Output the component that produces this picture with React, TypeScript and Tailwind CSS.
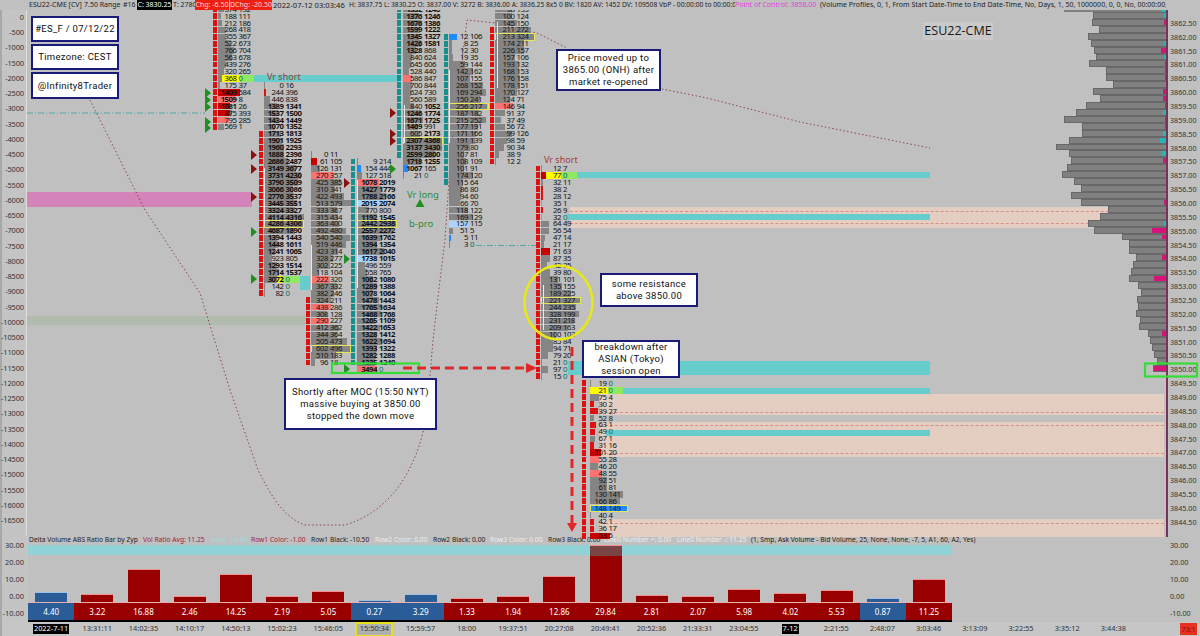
import React from "react";

const STEP = 6.93;
const rowY = (n: number) => 23 + n * STEP;

const DR = "#c80000";
const LR = "#ff7272";
const R = "#e01010";
const BL = "#1e8cff";
const LB = "#a8d4ff";
const GY = "#858585";
const YE = "#ffff00";
const GR = "#8fe860";

type Seg = [string, number];
type Col = {
  n: number;
  railX: number;
  railColor: string;
  rail: [number, number];
  barX: number;
  split: number;
  scale: number;
  rows: string;
  over?: Record<number, Seg[]>;
  hl?: number[];
  hlW?: number;
};

const columns: Col[] = [
  {
    n: -2, railX: 213, railColor: R, rail: [-2, 15], barX: 218, split: 236.5, scale: 0.011,
    rows: "374 132,188 111,212 186,268 418,355 367,522 673,766 704,563 678,439 276,320 265,368 0,175 37,1409 584,1509 8,1081 26,875 393,795 285,569 1",
    over: { 10: [[GY, 4], [YE, 18], [GR, 14]], 12: [[DR, 22]], 13: [[LR, 17]], 14: [[DR, 12]], 15: [[DR, 12], [GY, 2]], 16: [[LR, 11]] },
  },
  {
    n: 9, railX: 259, railColor: R, rail: [16, 39], barX: 264, split: 283.5, scale: 0.0047,
    rows: "0 16,244 396,446 838,1389 1341,1537 1500,1434 1449,1070 1352,1713 1813,1901 1925,1960 2293,1888 2396,2686 2487,3149 3677,3731 4230,3790 3509,3066 3086,2776 3537,3445 3551,3324 3327,4114 4316,4286 4306,4687 1890,1394 1443,1448 1611,1241 1065,923 805,1293 1514,1714 1537,3072 0,142 0,82 0",
    over: { 1: [[R, 2]], 28: [[GY, 13], [YE, 4], [GR, 19]] },
    hl: [20], hlW: 40,
  },
  {
    n: 19, railX: 306, railColor: R, rail: [40, 49], barX: 311, split: 328, scale: 0.0365,
    rows: "0 11,61 105,126 131,270 357,425 385,310 341,422 493,513 579,333 367,315 434,363 400,492 480,540 540,519 446,423 314,328 277,302 225,118 104,222 320,367 332,382 246,324 211,438 286,308 128,290 227,412 362,344 364,505 473,602 496,510 183,96 18",
    over: { 0: [[GY, 1]], 1: [[DR, 6]], 3: [[LR, 22]], 18: [[LR, 19]], 22: [[LR, 20]], 24: [[LR, 18]] },
    hl: [28], hlW: 40,
  },
  {
    n: 20, railX: 351, railColor: "#16908c", rail: [20, 49], barX: 357, split: 377, scale: 0.0074,
    rows: "9 214,154 444,127 518,1078 2019,1427 1779,1788 2166,2015 2074,770 800,1192 1545,2442 2938,2557 2272,1639 1762,1394 1354,1617 2040,1738 1015,496 559,558 765,1062 1080,1289 1388,1078 1064,1478 1443,1765 1634,1468 1768,1265 1109,1422 1653,1328 1412,1622 1694,1393 1322,1282 1288,1235 1240,3494 0",
    over: { 0: [[GY, 1]], 1: [[BL, 4]], 2: [[GY, 5]], 3: [[LR, 22]], 6: [[LB, 30]], 14: [[LB, 18]], 30: [[LR, 20]] },
    hl: [9], hlW: 40,
  },
  {
    n: -2, railX: 397, railColor: "#16908c", rail: [-2, 19], barX: 403, split: 422, scale: 0.006,
    rows: "1332 1248,1376 1246,1676 1386,1599 1222,1345 1327,1426 1581,1328 868,840 624,645 606,528 440,586 847,700 844,624 730,560 589,840 1052,1246 1774,1671 1725,1469 991,605 2173,2307 4368,3137 3430,2599 2800,1718 1255,1067 165,21 0",
    over: { 10: [[LR, 9]], 23: [[BL, 5], [LB, 2]], 24: [[GY, 1]] },
    hl: [19], hlW: 40,
  },
  {
    n: 2, railX: 444, railColor: "#16908c", rail: [2, 23], barX: 449, split: 468, scale: 0.08,
    rows: "12 106,8 25,12 30,19 35,59 144,142 162,107 155,268 152,169 294,150 241,256 217,187 182,215 252,177 191,171 166,191 139,179 80,107 81,108 109,101 91,174 120,115 64,86 80,94 60,66 70,118 122,169 129,157 115,51 5,5 11,3 0",
    over: { 0: [[BL, 8]], 27: [[LB, 20]], 29: [[BL, 2]] },
    hl: [10], hlW: 40,
  },
  {
    n: -2, railX: 490, railColor: R, rail: [1, 20], barX: 495, split: 514.5, scale: 0.0745,
    rows: "98 133,100 124,145 150,211 272,213 324,174 211,226 157,157 106,193 132,168 153,176 158,178 151,170 127,124 71,146 94,91 37,37 49,56 72,99 126,98 59,90 34,38 9,12 2",
    over: { 14: [[LR, 18]] },
    hl: [4], hlW: 40,
  },
  {
    n: 21, railX: 536, railColor: R, rail: [21, 51], barX: 541, split: 561, scale: 0.073,
    rows: "12 7,77 0,32 11,38 2,28 12,35 1,26 9,32 0,64 49,56 54,47 14,21 17,71 63,87 35,42 35,39 80,131 101,135 155,189 225,221 327,244 235,328 199,231 218,209 163,100 103,85 84,94 71,79 20,21 0,97 0,15 0",
    over: { 0: [[GY, 1]], 1: [[DR, 5], [YE, 15], [GR, 16]], 2: [[GY, 2]], 3: [[R, 2]], 4: [[R, 2]], 5: [[LR, 1]], 6: [[R, 2]], 7: [[LR, 1]], 12: [[DR, 9]], 28: [[GY, 1]], 30: [[GY, 1]] },
    hl: [19], hlW: 40,
  },
  {
    n: 52, railX: 582, railColor: R, rail: [52, 74], barX: 590, split: 606.5, scale: 0.12,
    rows: "19 0,21 0,75 4,30 2,39 27,52 8,63 1,49 0,67 1,31 16,101 20,55 28,46 20,48 55,92 51,61 81,130 141,166 86,148 149,40 4,42 1,36 17,53 5",
    over: { 0: [[GY, 1]], 1: [[YE, 18], [GR, 15]], 3: [[R, 4]], 4: [[R, 8]], 5: [[GY, 4]], 6: [[R, 6]], 7: [[R, 5]], 8: [[GY, 5]], 9: [[R, 4]], 10: [[DR, 11]], 11: [[LR, 9]], 13: [[LR, 12]], 18: [[BL, 38]], 19: [[GY, 1]], 20: [[R, 4]], 21: [[R, 4]], 22: [[DR, 20]] },
    hl: [18], hlW: 38,
  },
];

const profile: [number, string?, number?][] = [
  [158, "t", 2], [156, "p", 2], [177, "t", 1], [143, "t", 1], [153, "t", 2], [162, "p", 5], [168, "t", 2], [147, "p", 1],
  [198, "p", 1], [199, "p", 1], [220], [160, "p", 3], [179, "p", 3], [138, "p", 1], [108, "t", 3], [72, "p", 1],
  [127, "p", 1], [127, "t", 3], [88, "t", 6], [47, "t", 1], [88, "t", 4], [92, "p", 3], [82], [66],
  [102], [124], [94, "t", 1], [124, "p", 2], [203], [181], [144, "t", 2], [162, "p", 14],
  [247, "p", 4], [268], [267], [288, "p", 4], [279], [273], [268, "p", 12], [293], [303], [291],
  [295], [289], [300], [296], [323, "p", 4], [329], [335], [343], [351], [340, "p", 13],
];

const priceLabels = Array.from({ length: 37 }, (_, i) => (3862.5 - i * 0.5).toFixed(2));
const leftLabels = Array.from({ length: 34 }, (_, i) => String(-i * 500));

const vals = ["4.40", "3.22", "16.88", "2.46", "14.25", "2.19", "5.05", "0.27", "3.29", "1.33", "1.94", "12.86", "29.84", "2.81", "2.07", "5.98", "4.02", "5.53", "0.87", "11.25"];
const blue = new Set(["4.40", "0.27", "3.29", "0.87"]);
const times = ["2022-7-11", "13:31:11", "14:02:35", "14:10:17", "14:50:13", "15:02:23", "15:46:05", "15:50:34", "15:59:57", "18:00", "19:37:51", "20:27:08", "20:49:41", "20:52:36", "21:33:31", "23:04:55", "7-12", "2:21:55", "2:48:07", "3:03:46", "3:13:09", "3:22:55", "3:35:12", "3:44:38"];

const bands: [number, number, number, number, string][] = [
  [27, 192, 225, 15, "#d484b8"],
  [27, 316, 279, 9, "#b2bcae"],
  [570, 207, 594, 21, "#e4cec2"],
  [600, 394, 564, 21, "#e4cec2"],
  [600, 422, 564, 35, "#e4cec2"],
  [600, 519, 564, 18, "#e4cec2"],
  [253, 75, 146, 7, "#66cccc"],
  [300, 276, 10, 14, "#66cccc"],
  [577, 172, 353, 6, "#66cccc"],
  [567, 214, 363, 6, "#66cccc"],
  [568, 361, 362, 14, "#66cccc"],
  [623, 388, 307, 6, "#66cccc"],
  [606, 430, 324, 6, "#66cccc"],
];

const dashed: [number, number][] = [[570, 211], [570, 223], [600, 412], [600, 425], [600, 453], [600, 523]];

const brackets: [number, number, number][] = [
  [264, 168, 58], [311, 245, 45], [357, 180, 108], [404, 105, 38], [449, 70, 73], [497, 22, 66], [543, 285, 45],
];

const tris: [number, number, string][] = [
  [205, 93, "g"], [205, 100, "g"], [205, 107, "g"], [205, 122, "g"], [205, 128, "g"],
  [251, 155, "r"], [251, 169, "r"], [251, 197, "r"], [251, 232, "g"], [251, 279, "g"],
  [344, 183, "r"], [344, 259, "g"], [344, 369, "g"],
  [390, 169, "g"], [390, 113, "r"], [390, 134, "r"], [390, 141, "r"],
];

const headerItems: [string, string, number][] = [
  ["Delta Volume ABS Ratio Bar by Zyp", "text-[#222222]", 114],
  ["Vol Ratio Avg: 11.25", "text-[#a02040]", 68],
  ["Zone: 15.00", "text-[#9fdcdc]", 40],
  ["Row1 Color: -1.00", "text-[#a02040]", 60],
  ["Row1 Black: -10.50", "text-[#222222]", 64],
  ["Row2 Color: 0.00", "text-[#eeeeee]", 58],
  ["Row2 Black: 0.00", "text-[#222222]", 57],
  ["Row3 Color: 0.00", "text-[#eeeeee]", 58],
  ["Row3 Black: 0.00", "text-[#222222]", 56],
  ["Line0 Number +: 0.00", "text-[#eeeeee]", 73],
  ["Line0 Number -: 11.25", "text-[#eeeeee]", 74],
  ["(1, Smp, Ask Volume - Bid Volume, 25, None, None, -7, 5, A1, 60, A2, Yes)", "text-[#222222]", 232],
];

function FootCol({ c }: { c: Col }) {
  const rows = c.rows.split(",");
  const rail: number[] = [];
  for (let n = c.rail[0]; n <= c.rail[1]; n++) rail.push(n);
  return (
    <>
      {rail.map((n) => (
        <div key={n} className="absolute" style={{ left: c.railX, top: rowY(n) - 3, width: 3.6, height: 5.9, background: c.railColor }} />
      ))}
      {rows.map((r, i) => {
        const [bid, ask] = r.split(" ");
        const total = Number(bid) + Number(ask);
        const segs: Seg[] = c.over?.[i] ?? [[GY, Math.max(1, total * c.scale)]];
        const y = rowY(c.n + i);
        const isHl = c.hl?.includes(i);
        return (
          <React.Fragment key={i}>
            <div className="absolute flex" style={{ left: c.barX, top: y - 3.3, height: 6.6 }}>
              {segs.map((s, j) => (
                <div key={j} className="h-full" style={{ width: s[1], background: s[0] }} />
              ))}
            </div>
            {isHl && (
              <div className="absolute border border-[#e6e65a]" style={{ left: c.barX, top: y - 3.6, width: c.hlW, height: 7.4 }} />
            )}
            <div
              className={`absolute text-right text-[7.8px] leading-[7px] tracking-[-0.5px] text-[#111111] ${Number(bid) >= 1000 ? "font-bold" : "font-normal"}`}
              style={{ left: c.split - 30, top: y - 3.5, width: 30 }}
            >
              {bid}
            </div>
            <div
              className={`absolute text-left text-[7.8px] leading-[7px] tracking-[-0.5px] ${Number(ask) >= 1000 ? "font-bold" : "font-normal"} ${ask === "0" ? "text-[#006a60]" : "text-[#111111]"}`}
              style={{ left: c.split + 2, top: y - 3.5, width: 30 }}
            >
              {ask}
            </div>
          </React.Fragment>
        );
      })}
    </>
  );
}

function Note({ x, y, w, h, lines }: { x: number; y: number; w: number; h: number; lines: string[] }) {
  return (
    <div
      className="absolute flex flex-col items-center justify-center border-2 border-[#1a1a78] bg-white font-['Roboto',sans-serif] text-[9.5px] leading-[12px] tracking-[0.3px] text-[#111] whitespace-nowrap"
      style={{ left: x, top: y, width: w, height: h }}
    >
      {lines.map((l) => (
        <div key={l}>{l}</div>
      ))}
    </div>
  );
}

function ChartCanvas() {
  return (
    <div className="absolute -left-[27px] -top-[10px] h-[636px] w-[1200px]">
      {bands.map((b, i) => (
        <div key={i} className="absolute" style={{ left: b[0], top: b[1], width: b[2], height: b[3], background: b[4] }} />
      ))}
      {dashed.map((d, i) => (
        <div key={i} className="absolute border-t border-dashed border-[#d88f86]" style={{ left: d[0], top: d[1], width: 1164 - d[0] }} />
      ))}

      <div className="absolute flex flex-col items-end left-[1000px] top-[9px] w-[166px]">
        <div className="flex h-[3px] w-[102px] justify-end bg-[#808080]">
          <div className="h-full w-[4px] bg-[#20b8b8]" />
        </div>
        {profile.map((p, i) => (
          <div
            key={i}
            className="flex h-[6.93px] justify-end border-y border-l border-[#686868] bg-[#808080]"
            style={{ width: (378 - p[0]) / 3 }}
          >
            {p[1] && <div className={p[1] === "p" ? "h-full bg-[#d8127a]" : "h-full bg-[#20b8b8]"} style={{ width: p[2] }} />}
          </div>
        ))}
      </div>
      <div className="absolute left-[1166px] top-[9px] h-[528px] w-[1.5px] bg-[#7a3358]" />

      <svg className="absolute left-0 top-0" width="1200" height="636" fill="none">
        <path
          d="M90 100 L145 210 L200 293 L230 390 L258 470 C272 498 285 518 305 525 L345 525 C368 518 385 505 400 485 C415 462 423 440 427 410 L433 340 L440 280 L445 240 L451 150 L467 20 L495 23 L537 33 L567 48 M662 89 L707 98 L800 122 L930 148"
          stroke="#7a1c30"
          strokeWidth="0.8"
          strokeDasharray="1.4 2.4"
        />
        <line x1="27" y1="113" x2="205" y2="113" stroke="#4fa8a8" strokeWidth="1" strokeDasharray="6 2 1 2" />
        <line x1="476" y1="245.5" x2="536" y2="245.5" stroke="#4fa8a8" strokeWidth="1" strokeDasharray="6 2 1 2" />
      </svg>

      {columns.map((c, i) => (
        <FootCol key={i} c={c} />
      ))}

      {brackets.map((b, i) => (
        <div key={i} className="absolute w-[1.2px] bg-[#e8e8e8]" style={{ left: b[0], top: b[1], height: b[2] }} />
      ))}

      <div className="absolute left-[267px] top-[71px] font-['Noto_Sans',sans-serif] text-[9px] leading-[12px] text-[#a23a3a]">Vr short</div>
      <div className="absolute left-[544px] top-[154px] font-['Noto_Sans',sans-serif] text-[9px] leading-[12px] text-[#a23a3a]">Vr short</div>
      <div className="absolute left-[407px] top-[189px] font-['Noto_Sans',sans-serif] text-[9.5px] leading-[12px] text-[#2e8b3a]">Vr long</div>
      <div className="absolute left-[409px] top-[218px] font-['Noto_Sans',sans-serif] text-[9.5px] leading-[12px] text-[#2e8b3a]">b-pro</div>
      <div className="absolute left-[923px] top-[22px] flex h-[18px] w-[70px] items-center justify-center bg-[#c9c9c9] font-['Open_Sans',sans-serif] text-[12.5px] leading-none text-[#181818]">
        ESU22-CME
      </div>

      <svg className="absolute left-0 top-0" width="1200" height="636" fill="none">
        {tris.map((t, i) => (
          <polygon
            key={i}
            points={`${t[0]},${t[1] - 5} ${t[0] + 6},${t[1]} ${t[0]},${t[1] + 5}`}
            fill={t[2] === "g" ? "#1f8f1f" : "#8b1010"}
          />
        ))}
        <polygon points="420,199 424.5,207 415.5,207" fill="#1f8f1f" />
        <ellipse cx="558.5" cy="302.5" rx="34" ry="37" stroke="#e8e814" strokeWidth="2.5" />
        <rect x="332" y="363.5" width="87" height="9.5" stroke="#33dd33" strokeWidth="2.2" />
        <rect x="1145" y="363.5" width="52" height="13" stroke="#33dd33" strokeWidth="2.2" />
        <line x1="403" y1="368" x2="528" y2="368" stroke="#e02828" strokeWidth="3" strokeDasharray="9 5" />
        <polygon points="526,363 537,368 526,373" fill="#e02828" />
        <line x1="572" y1="347" x2="572" y2="524" stroke="#e02828" strokeWidth="3" strokeDasharray="9 5" />
        <polygon points="567,523 577,523 572,532" fill="#e02828" />
      </svg>

      <Note x={31} y={16} w={88} h={26} lines={["#ES_F / 07/12/22"]} />
      <Note x={31} y={44} w={88} h={26} lines={["Timezone: CEST"]} />
      <Note x={31} y={72} w={88} h={27} lines={["@Infinity8Trader"]} />
      <Note x={556} y={49} w={105} h={42} lines={["Price moved up to", "3865.00 (ONH) after", "market re-opened"]} />
      <Note x={600} y={273} w={98} h={34} lines={["some resistance", "above 3850.00"]} />
      <Note x={582} y={340} w={98} h={38} lines={["breakdown after", "ASIAN (Tokyo)", "session open"]} />
      <Note x={284} y={378} w={153} h={52} lines={["Shortly after MOC (15:50 NYT)", "massive buying at 3850.00", "stopped the down move"]} />
    </div>
  );
}

export default function App() {
  return (
    <div className="relative h-[636px] w-[1200px] overflow-hidden bg-[#c0c0c0] font-['Noto_Sans',sans-serif] text-[#222]">
      {/* Title bar */}
      <div className="relative z-20 flex h-[10px] items-center overflow-hidden whitespace-pre bg-[#c0c0c0] pl-[29px] text-[7px] leading-[10px] text-[#222]">
        <span className="w-[55px] shrink-0">ESU22-CME [CV]</span>
        <span className="w-[39px] shrink-0">7.50 Range</span>
        <span className="w-[14px] shrink-0">#16</span>
        <span className="w-[35px] shrink-0 bg-black text-center text-white">C: 3830.25</span>
        <span className="w-[23px] shrink-0 pl-[1px]">T: 2780</span>
        <span className="mr-[1px] w-[34px] shrink-0 bg-[#f02010] text-center text-[#ffd8d8]">Chg: -6.50</span>
        <span className="mr-[1px] w-[42px] shrink-0 bg-[#f02010] text-center text-[#ffd8d8]">DChg: -20.50</span>
        <span className="w-[76px] shrink-0 text-[7.6px]">2022-07-12 03:03:46</span>
        <span className="w-[386px] shrink-0 overflow-hidden text-[6.7px]">H: 3837.75 L: 3830.25 O: 3837.00 V: 3272 B: 3836.00 A: 3836.25 8x5 0 BV: 1820 AV: 1452 DV: 109508 VbP - 00:00:00 to 00:00:00</span>
        <span className="w-[85px] shrink-0 text-[7px] text-[#e040e0]">Point of Control: 3858.00</span>
        <span className="w-[346px] shrink-0 overflow-hidden">(Volume Profiles, 0, 1, From Start Date-Time to End Date-Time, No, Days, 1, 50, 1000000, 0, 0, No, 00:00:00, 0, 0</span>
      </div>

      {/* Main chart row */}
      <div className="flex h-[526px]">
        <div className="flex w-[27px] flex-col items-end border-l-[2px] border-r border-l-[#a8a8a8] border-r-[#dedede] bg-[#c4c4c4] pr-[2px]">
          {leftLabels.map((l) => (
            <div key={l} className="flex h-[15.25px] items-center text-[7.4px] leading-none tracking-[-0.1px] text-[#333]">{l}</div>
          ))}
        </div>
        <div className="relative z-10 flex-1">
          <ChartCanvas />
        </div>
        <div className="flex w-[34px] flex-col pl-[4px] pt-[6.5px]">
          {priceLabels.map((l) => (
            <div key={l} className="flex h-[13.86px] items-center text-[7.2px] leading-none text-[#333]">{l}</div>
          ))}
        </div>
      </div>

      {/* Study row */}
      <div className="flex h-[86px]">
        <div className="flex w-[28px] flex-col items-end border-l-[2px] border-l-[#a8a8a8] bg-[#c4c4c4] pr-[4px] pt-[1px]">
          {["30.00", "20.00", "10.00", "0.00", "-10.00"].map((l) => (
            <div key={l} className="flex h-[18.6px] items-center text-[7.4px] leading-none text-[#333]">{l}</div>
          ))}
        </div>
        <div className="relative w-[924px]">
          <div className="flex h-[9px] items-center whitespace-nowrap pl-[1px] text-[6.7px] leading-none">
            {headerItems.map((h) => (
              <span key={h[0]} className={`shrink-0 ${h[1]}`} style={{ width: h[2] }}>{h[0]}</span>
            ))}
          </div>
          <div className="absolute left-0 top-[9px] h-[10px] w-full bg-[#90d2d6]" />
          <div className="relative flex h-[57px] items-end">
            {vals.map((v) => {
              const n = Number(v);
              const h = Math.min(57, n * 1.83 + 2);
              return (
                <div key={v} className="flex flex-1 justify-center">
                  <div
                    className={`flex w-[32px] flex-col border-t ${blue.has(v) ? "border-t-[#9fc0e0] bg-[#2a5c98]" : "border-t-[#f09090] bg-[#980000]"}`}
                    style={{ height: h }}
                  >
                    {n > 25 && <div className="h-[10px] w-full bg-[#7a4444]" />}
                  </div>
                </div>
              );
            })}
          </div>
          <div className="flex h-[20px] border-b-2 border-t border-b-black border-t-[#e8b0b0]">
            {vals.map((v) => (
              <div key={v} className={`flex flex-1 items-center justify-center text-[8px] text-white ${blue.has(v) ? "bg-[#2a5c98]" : "bg-[#980000]"}`}>
                {v}
              </div>
            ))}
          </div>
        </div>
        <div className="ml-auto flex w-[30px] flex-col pt-[1px]">
          {["30.00", "20.00", "10.00", "0.00", "-10.00"].map((l) => (
            <div key={l} className="flex h-[18.6px] items-center text-[7.2px] leading-none text-[#333]">{l}</div>
          ))}
        </div>
      </div>

      {/* Time axis */}
      <div className="flex h-[14px] items-center border-l-[2px] border-l-[#a8a8a8] bg-[#c6c6c6] pl-[26px] pr-[3px]">
        {times.map((t) => (
          <div key={t} className="relative flex h-full w-[46.2px] shrink-0 items-center justify-center text-[7.4px] leading-none text-[#333]">
            {t === "2022-7-11" || t === "7-12" ? (
              <span className="bg-black px-[1px] py-[1px] text-white">{t}</span>
            ) : t === "15:50:34" ? (
              <span className="flex h-[15px] w-[38px] items-center justify-center border-2 border-[#e6e01c] bg-[#b0b0b0]">{t}</span>
            ) : (
              t
            )}
          </div>
        ))}
        <div className="ml-auto flex h-[12px] w-[17px] items-center justify-center bg-[#e83020] text-[7px] leading-none text-[#801010]">73:1</div>
      </div>
    </div>
  );
}
